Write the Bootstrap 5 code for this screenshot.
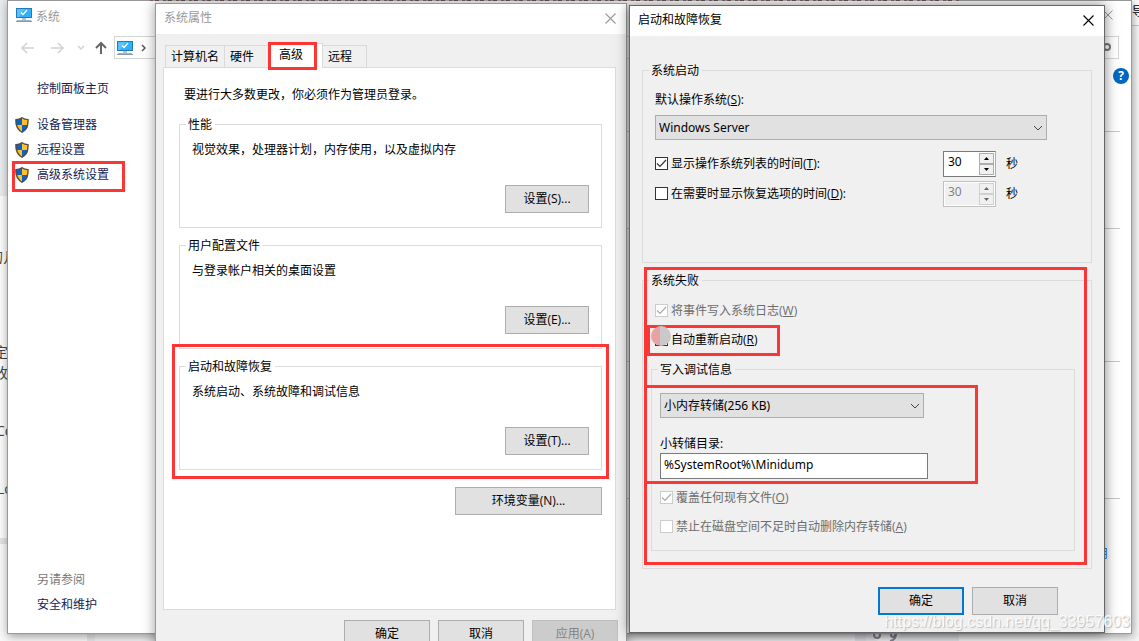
<!DOCTYPE html>
<html lang="zh-CN">
<head>
<meta charset="utf-8">
<meta name="viewport" content="width=device-width, initial-scale=1">
<title>系统属性</title>
<link href="https://cdn.jsdelivr.net/npm/bootstrap@5.3.0/dist/css/bootstrap.min.css" rel="stylesheet">
<style>
  body { font: 12px/18px "Open Sans", "Noto Sans CJK SC", sans-serif; color: #000; background: #e9ebee; }
  .desktop { min-height: 100vh; }
  .win { position: absolute; background: #f0f0f0; border: 1px solid #999; }
  .titlebar { height: 30px; background: #fff; padding: 0 10px 2px 8px; }
  .dim { color: #999; }
  .close-x { border: 0; padding: 0; background: none; line-height: 0; color: inherit; }

  /* page behind the windows */
  .page-left, .page-right { position: absolute; top: 0; bottom: 0; width: 8px; overflow: hidden; white-space: nowrap; }
  .page-left { left: 0; background: linear-gradient(#e9ebee 196px, #fbfbfb 196px 538px, #e0e2e5 538px 544px, #f8f8f8 544px); color: #444; font-size: 14px; }
  .page-right { right: 0; background: linear-gradient(#fff 25px, #ccc 25px 26px, #fafafa 26px); }
  .page-left span, .page-right span { position: absolute; }
  .page-foot { position: absolute; left: 0; right: 0; bottom: 0; height: 8px; background: linear-gradient(90deg, #f8f8f8 87px, #e4e6ea 87px 95px, #eeeff2 95px 855px, #dcdfe4 855px 866px, #e5e7ea 866px 959px, #f6f6f6 959px); overflow: hidden; }
  .page-foot svg { position: absolute; left: 862px; top: 0; }
  .page-top { position: absolute; top: 0; left: 150px; right: 180px; height: 1px; background: repeating-linear-gradient(90deg, #766 0 3px, #a99 3px 5px, #655 5px 9px, #bab4b4 9px 13px); }

  /* system window */
  .win-system { left: 7px; right: 7px; top: 0; bottom: 7px; background: #fff; box-shadow: 1px 2px 9px rgba(0,0,0,.4); }
  .side { width: 148px; padding: 19px 0 19px 7px; }
  .side a { color: #151c55; text-decoration: none; }
  .side-link { gap: 8px; height: 25px; }
  .side-text { padding-left: 22px; }
  .side-home { margin-bottom: 14px; }
  .address { border: 1px solid #d5d5d5; height: 23px; padding: 0 2px; gap: 8px; }
  .search { border: 1px solid #d5d5d5; width: 180px; height: 23px; margin-right: 12px; padding: 0 5px; }
  .sys-main { padding: 72px 11px 0 20px; }
  .rule { border-bottom: 1px solid #c8c8c8; }
  .help { width: 16px; height: 16px; border-radius: 50%; background: #0067c0; color: #fff; font-weight: 700; line-height: 16px; border: 0; padding: 0; position: absolute; right: 2px; top: 67px; }

  /* dialogs */
  .win-props { left: 155px; top: 3px; width: 472px; box-shadow: 0 0 12px rgba(0,0,0,.4); }
  .win-recovery { left: 629px; top: 5px; width: 476px; border-color: #666; box-shadow: 0 0 12px rgba(0,0,0,.5); }
  .tabs { padding: 9px 0 0 9px; margin-bottom: -1px; position: relative; z-index: 1; }
  .tab-btn { height: 23px; border: 1px solid #d9d9d9; background: #f0f0f0; padding: 0 5px; margin-right: -1px; text-align: left; color: #000; white-space: nowrap; }
  .tab-on { height: 25px; width: 55px; background: #fff; border-bottom-color: #fff; padding: 0 10px 2px; }
  .pane { background: #fff; border: 1px solid #dcdcdc; margin: 0 10px 0 7px; padding: 18px 13px 0 15px; min-height: 543px; }
  .intro { padding: 0 0 11px 5px; }
  .group { border: 1px solid #dcdcdc; margin: 0; padding: 0 12px; min-width: 0; }
  .group > legend { float: none; width: auto; font-size: 12px; line-height: 16px; margin: 0 0 0 -6px; padding: 2px 3px 0 2px; }
  .group-short { padding-bottom: 14px; }
  .group-short p { margin: 8px 0 26px; }
  .w-btn { height: 28px; border: 1px solid #adadad; background: #e1e1e1; color: #000; padding: 0; }
  .w-btn:disabled { background: #ccc; border-color: #bfbfbf; color: #838383; }
  .w-84 { width: 84px; } .w-86 { width: 86px; } .w-147 { width: 147px; }
  .w-default { border: 2px solid #0078d7; }

  .combo { appearance: none; display: block; height: 25px; border: 1px solid #adadad; border-radius: 0; color: #000; padding: 0 20px 0 3px;
    background: #e1e1e1 url("data:image/svg+xml,%3Csvg xmlns='http://www.w3.org/2000/svg' width='10' height='6'%3E%3Cpath d='M1 1l4 4 4-4' fill='none' stroke='%23444'/%3E%3C/svg%3E") no-repeat right 3px center; }
  .latin { font-family: "Noto Sans", "Noto Sans CJK SC", sans-serif; }
  .path-box { display: block; width: 268px; height: 26px; border: 1px solid #7a7a7a; padding: 0 3px 3px; background: #fff; }
  .tick { appearance: none; flex: none; width: 13px; height: 13px; margin: 0 0 1px; border: 1px solid #333; background: #fff; }
  .tick:checked { background: #fff url("data:image/svg+xml,%3Csvg xmlns='http://www.w3.org/2000/svg' width='11' height='11'%3E%3Cpath d='M1 5.5l3 3 6-6.500' fill='none' stroke='%23333' stroke-width='1.200'/%3E%3C/svg%3E") no-repeat center; }
  .tick:disabled { border-color: #ccc; }
  .tick:disabled:checked { background-image: url("data:image/svg+xml,%3Csvg xmlns='http://www.w3.org/2000/svg' width='11' height='11'%3E%3Cpath d='M1 5.5l3 3 6-6.500' fill='none' stroke='%23aaa' stroke-width='1.200'/%3E%3C/svg%3E"); }
  .tick-row { gap: 3px; height: 18px; }
  .tick-row:has(:disabled) { color: #6d6d6d; }
  .tick-time { width: 288px; }
  .spin { width: 53px; height: 26px; border: 1px solid #7a7a7a; border-right-color: #adadad; background: #fff; padding: 1px; }
  .spin input { width: 34px; border: 0; padding: 0 0 4px 3px; background: none; font-size: 12px; appearance: textfield; }
  .spin input::-webkit-inner-spin-button { display: none; }
  .spin-keys button { width: 15px; height: 11px; border: 1px solid #adadad; background: #f0f0f0; padding: 0; line-height: 0; color: #000; }
  .spin-off { border-color: #c0c0c0; }
  .spin-off input { background: #f0f0f0; color: #838383; }
  .spin-off .spin-keys button { border-color: #d0d0d0; color: #666; }
  .rec-body { padding: 25px 12px 17px; }
  .inner-group { margin: 11px 4px 0 -4px; padding: 0 8px 14px; }
  .inner-group > legend { margin-left: -2px; }

  /* red annotation frames */
  .ring { position: absolute; border: 3px solid #fd3535; pointer-events: none; z-index: 2; }
  .ring-side { inset: -1px 31px -5px -3px; }
  .ring-tab { inset: -2px 5px -3px -1px; }
  .ring-startup { inset: -13px -7px -9px -7px; }
  .ring-failure { inset: -4px 5px 4px 2px; }
  .ring-restart { inset: -6px auto -7px -8px; width: 133px; }
  .ring-dump { inset: -8px auto -5px -16px; width: 334px; }
  .pointer-dot { position: absolute; left: -4px; top: -5px; width: 20px; height: 20px; border-radius: 50%; background: linear-gradient(90deg, #e7a3a3 9px, #c9c9c9 9px); z-index: 3; }
  .watermark { position: absolute; right: 9px; bottom: 8px; font: 16px/22px "Liberation Sans", sans-serif; color: #fafafa; text-shadow: 1px 1px 1px #bbb; z-index: 5; }
</style>
</head>
<body>
<svg class="d-none">
  <symbol id="pc" viewBox="0 0 16 16"><path d="M0 1h16v10H0z" fill="#237ab5"/><path d="M1 2h14v8H1z" fill="#2eb0fa"/><path d="M1 2h8L3 10H1z" fill="#55c2ff"/><path d="M5 5.500l2 2L11 3" fill="none" stroke="#fff" stroke-width="1.500"/><path d="M6 11h4v2H6z" fill="#b5c6d2"/><path d="M1 13h14v1H1z" fill="#a0b6c6"/><path d="M0 14h16v1H0z" fill="#8299aa"/></symbol>
  <symbol id="shield" viewBox="0 0 14 16"><path d="M7 .5C5 2 3 2.500.7 2.500.5 8 1.500 12.500 7 15.500c5.500-3 6.500-7.500 6.300-13C11 2.500 9 2 7 .5z" fill="#ffc02e"/><path d="M7 8H.8c.5 3.500 2.200 5.800 6.200 7.500zM7 .5V8h6.200c.2-2 .2-4 .1-5.500C11 2.500 9 2 7 .5z" fill="#ffc02e"/><path d="M7 .5V8H.8C.6 6 .6 4 .7 2.500 3 2.500 5 2 7 .5zM7 8h6.200c-.5 3.500-2.200 5.800-6.200 7.500z" fill="#0c63c4"/><path d="M7 .8C5 2.300 3 2.700 1 2.700.8 8 1.700 12.300 7 15.200c5.300-2.900 6.200-7.200 6-12.500C11 2.700 9 2.300 7 .8z" fill="none" stroke="#4d4d4d" stroke-width="1.300"/></symbol>
  <symbol id="x" viewBox="0 0 11 11"><path d="M.5.5l10 10M10.500.5l-10 10" stroke="currentColor" stroke-width="1.100"/></symbol>
  <symbol id="up" viewBox="0 0 5 3"><path d="M0 3L2.500 0 5 3z" fill="currentColor"/></symbol>
  <symbol id="down" viewBox="0 0 5 3"><path d="M0 0l2.500 3L5 0z" fill="currentColor"/></symbol>
</svg>

<main class="desktop position-relative overflow-hidden">
  <div class="page-left">
    <span style="top:248px;left:-11px">的几</span>
    <span style="top:343px;left:-6px">定</span>
    <span style="top:364px;left:-6px">收</span>
    <span style="top:422px;left:-4px">Co</span>
    <span style="top:480px;left:-3px">Lo</span>
  </div>
  <div class="page-right"><span style="top:3px;left:1px">导</span></div>
  <div class="page-foot"><svg width="50" height="8"><circle cx="24" cy="-8" r="18" fill="#f4f4f6"/><path d="M12 0v2q0 3 3 3t3-3V0M29 0v2q0 2 2 2t3-4M34 1q0 6-6 7" fill="none" stroke="#889" stroke-width="2"/></svg></div>

  <section class="win win-system d-flex flex-column">
    <header class="titlebar d-flex align-items-center dim">
      <svg width="16" height="16"><use href="#pc"/></svg>
      <span class="ms-1 pt-1">系统</span>
      <button class="close-x ms-auto me-2" aria-label="关闭"><svg width="10" height="10"><use href="#x"/></svg></button>
    </header>
    <nav class="d-flex align-items-center pt-1 pb-1" style="height:33px">
      <svg width="106" height="16" fill="none" stroke-width="1.500"><path d="M26 8H14M19 3l-5 5 5 5M43 8h12M50 3l5 5-5 5M70 6l3 3 3-3" stroke="#d2d2d2"/><path d="M93 14V3M88 8l5-5 5 5" stroke="#666" stroke-width="2"/></svg>
      <div class="address d-flex align-items-center flex-grow-1 me-2"><svg width="16" height="16"><use href="#pc"/></svg><svg width="5" height="8"><path d="M1 1l3 3-3 3" fill="none" stroke="#555" stroke-width="1.500"/></svg></div>
      <div class="search d-flex align-items-center justify-content-end"><svg width="14" height="14" fill="none" stroke="#777" stroke-width="2"><circle cx="8" cy="6" r="3"/><path d="M6 8l-5 5"/></svg></div>
    </nav>
    <button class="help" aria-label="帮助">?</button>
    <div class="d-flex flex-grow-1">
      <aside class="side d-flex flex-column" style="margin-top:-3px">
        <a class="side-text side-home" href="#">控制面板主页</a>
        <a class="side-link d-flex align-items-center" href="#"><svg width="14" height="16"><use href="#shield"/></svg>设备管理器</a>
        <a class="side-link d-flex align-items-center" href="#"><svg width="14" height="16"><use href="#shield"/></svg>远程设置</a>
        <a class="side-link d-flex align-items-center position-relative" href="#"><svg width="14" height="16"><use href="#shield"/></svg>高级系统设置<i class="ring ring-side"></i></a>
        <span class="side-text mt-auto" style="color:#777">另请参阅</span>
        <a class="side-text" style="padding-top:7px" href="#">安全和维护</a>
      </aside>
      <div class="sys-main flex-grow-1">
        <div class="rule" style="margin-top:-5px"></div>
        <div class="rule" style="height:97px"></div>
        <div class="rule" style="height:133px"></div>
        <div class="rule" style="height:137px"></div>
        <div class="text-end pe-2" style="padding-top:46px"><a href="#" class="text-decoration-none me-1">用</a></div>
      </div>
    </div>
  </section>
  <div class="page-top"></div>

  <section class="win win-props">
    <header class="titlebar d-flex align-items-center justify-content-between dim"><span>系统属性</span><button class="close-x" aria-label="关闭"><svg width="11" height="11"><use href="#x"/></svg></button></header>
    <div class="tabs d-flex align-items-end" role="tablist">
      <button class="tab-btn" role="tab" style="width:60px">计算机名</button>
      <button class="tab-btn" role="tab" style="width:45px">硬件</button>
      <button class="tab-btn tab-on position-relative" role="tab" aria-selected="true">高级<i class="ring ring-tab"></i></button>
      <button class="tab-btn" role="tab" style="width:45px">远程</button>
    </div>
    <div class="pane">
      <p class="intro mb-0">要进行大多数更改，你必须作为管理员登录。</p>
      <fieldset class="group group-short mb-2"><legend>性能</legend>
        <p>视觉效果，处理器计划，内存使用，以及虚拟内存</p>
        <button class="w-btn w-84 d-block ms-auto">设置(S)...</button>
      </fieldset>
      <fieldset class="group group-short mb-2"><legend>用户配置文件</legend>
        <p>与登录帐户相关的桌面设置</p>
        <button class="w-btn w-84 d-block ms-auto">设置(E)...</button>
      </fieldset>
      <div class="position-relative">
        <fieldset class="group group-short"><legend>启动和故障恢复</legend>
          <p>系统启动、系统故障和调试信息</p>
          <button class="w-btn w-84 d-block ms-auto">设置(T)...</button>
        </fieldset>
        <i class="ring ring-startup"></i>
      </div>
      <button class="w-btn w-147 d-block ms-auto" style="margin-top:17px">环境变量(N)...</button>
    </div>
    <footer class="d-flex justify-content-end gap-2" style="padding:10px 8px">
      <button class="w-btn w-86">确定</button><button class="w-btn w-86">取消</button><button class="w-btn w-86" disabled>应用(A)</button>
    </footer>
  </section>

  <section class="win win-recovery">
    <header class="titlebar d-flex align-items-center justify-content-between"><span>启动和故障恢复</span><button class="close-x" aria-label="关闭"><svg width="11" height="11"><use href="#x"/></svg></button></header>
    <div class="rec-body">
      <fieldset class="group mb-2" style="padding-bottom:55px"><legend>系统启动</legend>
        <label for="os" class="d-block" style="padding:12px 0 6px">默认操作系统(<u>S</u>):</label>
        <select id="os" class="combo latin" style="width:392px"><option>Windows Server</option></select>
        <div class="d-flex align-items-center" style="margin-top:11px">
          <label class="tick-row tick-time d-flex align-items-center"><input class="tick" type="checkbox" checked><span>显示操作系统列表的时间(<u>T</u>):</span></label>
          <div class="spin d-flex"><input class="latin" type="number" value="30" aria-label="显示列表秒数"><div class="spin-keys d-flex flex-column"><button aria-label="增加"><svg width="5" height="3"><use href="#up"/></svg></button><button aria-label="减少"><svg width="5" height="3"><use href="#down"/></svg></button></div></div>
          <span style="padding-left:10px">秒</span>
        </div>
        <div class="d-flex align-items-center mt-1">
          <label class="tick-row tick-time d-flex align-items-center"><input class="tick" type="checkbox"><span>在需要时显示恢复选项的时间(<u>D</u>):</span></label>
          <div class="spin spin-off d-flex"><input class="latin" type="number" value="30" disabled aria-label="恢复选项秒数"><div class="spin-keys d-flex flex-column"><button disabled aria-label="增加"><svg width="5" height="3"><use href="#up"/></svg></button><button disabled aria-label="减少"><svg width="5" height="3"><use href="#down"/></svg></button></div></div>
          <span style="padding-left:10px">秒</span>
        </div>
      </fieldset>
      <div class="position-relative">
        <fieldset class="group" style="padding-bottom:17px"><legend>系统失败</legend>
          <label class="tick-row d-flex align-items-center" style="margin:13px 0 11px"><input class="tick" type="checkbox" checked disabled><span>将事件写入系统日志(<u>W</u>)</span></label>
          <div class="position-relative">
            <label class="tick-row d-flex align-items-center"><input class="tick" type="checkbox"><span>自动重新启动(<u>R</u>)</span></label>
            <i class="ring ring-restart"></i><i class="pointer-dot"></i>
          </div>
          <fieldset class="group inner-group"><legend>写入调试信息</legend>
            <div class="position-relative" style="margin-top:15px">
              <select class="combo latin" style="width:264px" aria-label="写入调试信息"><option>小内存转储(256 KB)</option></select>
              <label for="dir" class="d-block" style="padding-top:17px">小转储目录:</label>
              <input id="dir" class="path-box latin" type="text" value="%SystemRoot%\Minidump">
              <i class="ring ring-dump"></i>
            </div>
            <label class="tick-row d-flex align-items-center" style="margin:10px 0 11px"><input class="tick" type="checkbox" checked disabled><span>覆盖任何现有文件(<u>O</u>)</span></label>
            <label class="tick-row d-flex align-items-center"><input class="tick" type="checkbox" disabled><span>禁止在磁盘空间不足时自动删除内存转储(<u>A</u>)</span></label>
          </fieldset>
        </fieldset>
        <i class="ring ring-failure"></i>
      </div>
      <footer class="d-flex justify-content-end gap-2" style="padding:18px 34px 0 0">
        <button class="w-btn w-86 w-default">确定</button><button class="w-btn w-86">取消</button>
      </footer>
    </div>
  </section>
  <span class="watermark">https://blog.csdn.net/qq_33957603</span>
</main>
<script src="https://cdn.jsdelivr.net/npm/bootstrap@5.3.0/dist/js/bootstrap.bundle.min.js"></script>
</body>
</html>
